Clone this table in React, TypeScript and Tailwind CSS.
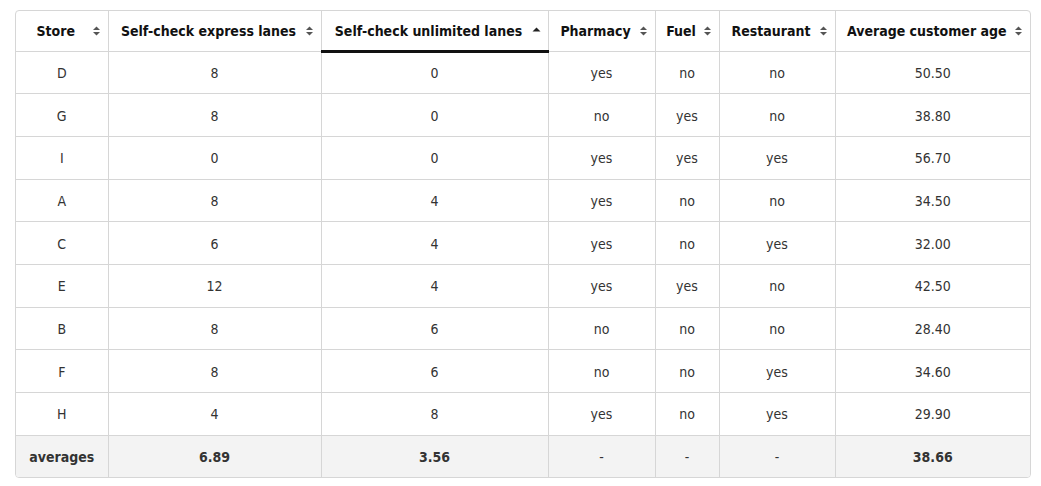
import React, { type JSX } from "react";

type Row = {
  store: string;
  express: number;
  unlimited: number;
  pharmacy: string;
  fuel: string;
  restaurant: string;
  age: string;
};

const rows: Row[] = [
  { store: "D", express: 8, unlimited: 0, pharmacy: "yes", fuel: "no", restaurant: "no", age: "50.50" },
  { store: "G", express: 8, unlimited: 0, pharmacy: "no", fuel: "yes", restaurant: "no", age: "38.80" },
  { store: "I", express: 0, unlimited: 0, pharmacy: "yes", fuel: "yes", restaurant: "yes", age: "56.70" },
  { store: "A", express: 8, unlimited: 4, pharmacy: "yes", fuel: "no", restaurant: "no", age: "34.50" },
  { store: "C", express: 6, unlimited: 4, pharmacy: "yes", fuel: "no", restaurant: "yes", age: "32.00" },
  { store: "E", express: 12, unlimited: 4, pharmacy: "yes", fuel: "yes", restaurant: "no", age: "42.50" },
  { store: "B", express: 8, unlimited: 6, pharmacy: "no", fuel: "no", restaurant: "no", age: "28.40" },
  { store: "F", express: 8, unlimited: 6, pharmacy: "no", fuel: "no", restaurant: "yes", age: "34.60" },
  { store: "H", express: 4, unlimited: 8, pharmacy: "yes", fuel: "no", restaurant: "yes", age: "29.90" },
];

const columns = [
  { label: "Store", width: "w-[92px]" },
  { label: "Self-check express lanes", width: "w-[213px]" },
  { label: "Self-check unlimited lanes", width: "w-[227px]", sorted: true },
  { label: "Pharmacy", width: "w-[107px]" },
  { label: "Fuel", width: "w-[64px]" },
  { label: "Restaurant", width: "w-[116px]" },
  { label: "Average customer age", width: "" },
];

// header sort arrows: single up triangle on the sorted column, up/down pair elsewhere
const SortIcon = ({ sorted }: { sorted?: boolean }) =>
  sorted ? (
    <svg width="9" height="11" viewBox="0 0 9 11" className="absolute right-[7px] top-1/2 -translate-y-1/2">
      <path d="M0.5 7 L4.5 3 L8.5 7 Z" fill="#222" />
    </svg>
  ) : (
    <svg width="9" height="11" viewBox="0 0 9 11" className="absolute right-[7px] top-1/2 -translate-y-1/2">
      <path d="M1 4.6 L4.5 1 L8 4.6 Z" fill="#555" />
      <path d="M1 6.4 L4.5 10 L8 6.4 Z" fill="#555" />
    </svg>
  );

export default function App(): JSX.Element {
  const cell = "border-r border-b border-[#d6d6d6] text-center h-[42.7px] p-0 pt-[2px]";
  const last = "border-b border-[#d6d6d6] text-center h-[42.7px] p-0 pt-[2px]";

  return (
    <div className="w-[1041px] h-[486px] bg-white pt-[10px] px-[15px] font-['DejaVu_Sans_Condensed','DejaVu_Sans',sans-serif] text-[14px]">
      <div className="w-[1016px] border border-[#d6d6d6] rounded-[4px] overflow-hidden">
        <table className="w-full table-fixed border-collapse">
          <thead>
            <tr>
              {columns.map((c, i) => (
                <th
                  key={c.label}
                  className={`${c.width} relative h-[40px] pl-[10px] pr-[22px] pt-[2px] text-center font-bold text-[#111] whitespace-nowrap ${
                    i < columns.length - 1 ? "border-r border-[#d6d6d6]" : ""
                  } ${c.sorted ? "border-b-[3px] border-b-[#111]" : "border-b border-b-[#d6d6d6]"}`}
                >
                  {c.label}
                  <SortIcon sorted={c.sorted} />
                </th>
              ))}
            </tr>
          </thead>
          <tbody className="text-[#333]">
            {rows.map((r) => (
              <tr key={r.store}>
                <td className={cell}>{r.store}</td>
                <td className={cell}>{r.express}</td>
                <td className={cell}>{r.unlimited}</td>
                <td className={cell}>{r.pharmacy}</td>
                <td className={cell}>{r.fuel}</td>
                <td className={cell}>{r.restaurant}</td>
                <td className={last}>{r.age}</td>
              </tr>
            ))}
          </tbody>
          <tfoot className="bg-[#f3f3f3] text-[#333]">
            <tr>
              <td className="border-r border-[#d6d6d6] text-center h-[42px] pt-[2px] font-bold">averages</td>
              <td className="border-r border-[#d6d6d6] text-center pt-[2px] font-bold">6.89</td>
              <td className="border-r border-[#d6d6d6] text-center pt-[2px] font-bold">3.56</td>
              <td className="border-r border-[#d6d6d6] text-center pt-[2px]">-</td>
              <td className="border-r border-[#d6d6d6] text-center pt-[2px]">-</td>
              <td className="border-r border-[#d6d6d6] text-center pt-[2px]">-</td>
              <td className="text-center pt-[2px] font-bold">38.66</td>
            </tr>
          </tfoot>
        </table>
      </div>
    </div>
  );
}
